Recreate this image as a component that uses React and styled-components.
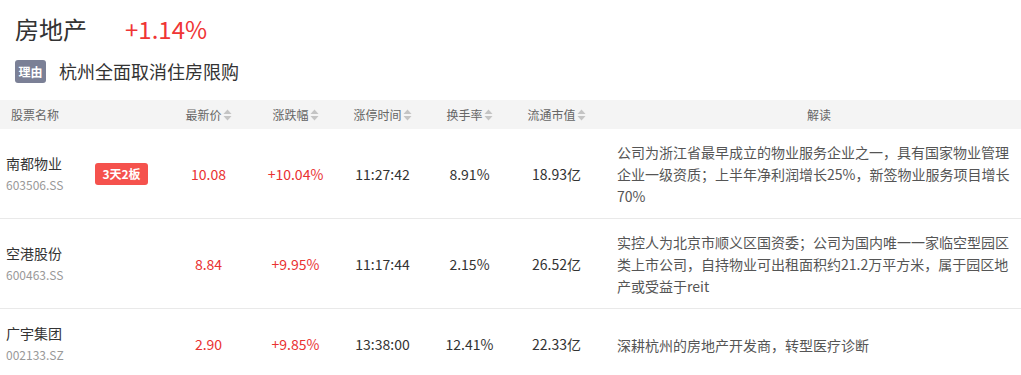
import React from 'react';
import styled, { createGlobalStyle } from 'styled-components';

const GlobalStyle = createGlobalStyle`
  body {
    margin: 0;
    background: #fff;
    font-family: 'Noto Sans CJK SC', 'Noto Sans', sans-serif;
  }
`;

const stocks = [
  {
    name: '南都物业',
    code: '603506.SS',
    badge: '3天2板',
    price: '10.08',
    change: '+10.04%',
    time: '11:27:42',
    turnover: '8.91%',
    cap: '18.93亿',
    note: '公司为浙江省最早成立的物业服务企业之一，具有国家物业管理企业一级资质；上半年净利润增长25%，新签物业服务项目增长70%',
  },
  {
    name: '空港股份',
    code: '600463.SS',
    price: '8.84',
    change: '+9.95%',
    time: '11:17:44',
    turnover: '2.15%',
    cap: '26.52亿',
    note: '实控人为北京市顺义区国资委；公司为国内唯一一家临空型园区类上市公司，自持物业可出租面积约21.2万平方米，属于园区地产或受益于reit',
  },
  {
    name: '广宇集团',
    code: '002133.SZ',
    price: '2.90',
    change: '+9.85%',
    time: '13:38:00',
    turnover: '12.41%',
    cap: '22.33亿',
    note: '深耕杭州的房地产开发商，转型医疗诊断',
  },
];

const SortIcon = () => (
  <svg width="9" height="12" viewBox="0 0 9 12">
    <path d="M4.5 0.5 L8.5 5 L0.5 5 Z" fill="#c4c4c4" />
    <path d="M0.5 7 L8.5 7 L4.5 11.5 Z" fill="#c4c4c4" />
  </svg>
);

const App = () => (
  <>
    <GlobalStyle />
    <Page>
      <Intro>
        <TitleRow>
          <Sector>房地产</Sector>
          <Pct>+1.14%</Pct>
        </TitleRow>
        <ReasonRow>
          <Tag>理由</Tag>
          <Reason>杭州全面取消住房限购</Reason>
        </ReasonRow>
      </Intro>

      <Table>
        <HeadRow>
          <HeadCell $align="left">股票名称</HeadCell>
          {['最新价', '涨跌幅', '涨停时间', '换手率', '流通市值'].map((h) => (
            <HeadCell key={h}>
              {h}
              <SortIcon />
            </HeadCell>
          ))}
          <HeadCell $note>解读</HeadCell>
        </HeadRow>

        {stocks.map((s) => (
          <Row key={s.code}>
            <NameCell>
              <NameBlock>
                <StockName>{s.name}</StockName>
                <StockCode>{s.code}</StockCode>
              </NameBlock>
              {s.badge && <Badge>{s.badge}</Badge>}
            </NameCell>
            <Cell $red>{s.price}</Cell>
            <Cell $red>{s.change}</Cell>
            <Cell>{s.time}</Cell>
            <Cell>{s.turnover}</Cell>
            <Cell>{s.cap}</Cell>
            <Note>{s.note}</Note>
          </Row>
        ))}
      </Table>
    </Page>
  </>
);

export default App;

const Page = styled.div`
  width: 1021px;
  color: #333;
`;

const Intro = styled.div`
  padding: 14px 15px 17px;
`;

const TitleRow = styled.div`
  display: flex;
  align-items: baseline;
  gap: 38px;
  font-size: 24px;
  line-height: 30px;
`;

const Sector = styled.span`
  color: #333;
`;

const Pct = styled.span`
  color: #ef3535;
`;

const ReasonRow = styled.div`
  display: flex;
  align-items: center;
  gap: 13px;
  margin-top: 15px;
`;

const Tag = styled.span`
  display: inline-flex;
  align-items: center;
  justify-content: center;
  width: 31px;
  height: 23px;
  border-radius: 3px;
  background: #7b8096;
  color: #fff;
  font-size: 12px;
  font-weight: 700;
`;

const Reason = styled.span`
  font-size: 18px;
  line-height: 24px;
  color: #333;
`;

const Table = styled.div`
  display: grid;
  grid-template-columns: 165px repeat(5, 87px) 1fr;
  grid-template-rows: 29px;
  grid-auto-rows: minmax(71px, auto);
`;

const HeadRow = styled.div`
  display: contents;
`;

const HeadCell = styled.div`
  display: flex;
  align-items: center;
  justify-content: ${(p) => (p.$align === 'left' ? 'flex-start' : 'center')};
  gap: 1px;
  padding: ${(p) => (p.$align === 'left' ? '0 0 0 11px' : p.$note ? '0 0 0 17px' : '0')};
  background: #f4f4f4;
  color: #666;
  font-size: 12px;
`;

const Row = styled.div`
  display: contents;

  & > * {
    border-bottom: 1px solid #e9e9e9;
  }
`;

const NameCell = styled.div`
  display: flex;
  align-items: center;
  padding-left: 6px;
`;

const NameBlock = styled.div`
  width: 89px;
  display: flex;
  flex-direction: column;
`;

const StockName = styled.span`
  font-size: 14px;
  line-height: 22px;
  color: #333;
`;

const StockCode = styled.span`
  font-size: 12px;
  line-height: 22px;
  color: #999;
`;

const Badge = styled.span`
  display: inline-flex;
  align-items: center;
  justify-content: center;
  width: 53px;
  height: 22px;
  border-radius: 3px;
  background: #f5524d;
  color: #fff;
  font-size: 12px;
  font-weight: 700;
`;

const Cell = styled.div`
  display: flex;
  align-items: center;
  justify-content: center;
  font-size: 14px;
  color: ${(p) => (p.$red ? '#e93232' : '#333')};
`;

const Note = styled.div`
  display: flex;
  align-items: center;
  padding: 12px 11px 11px 17px;
  font-size: 14px;
  line-height: 22px;
  color: #555;
`;
